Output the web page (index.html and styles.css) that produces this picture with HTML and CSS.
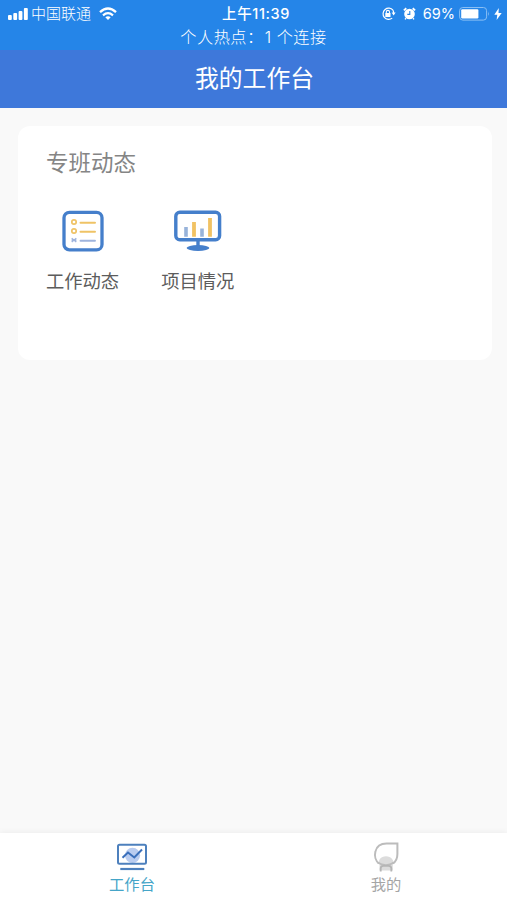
FILE: index.html
```html
<!DOCTYPE html>
<html lang="zh-CN">
<head>
    <meta charset="UTF-8">
    <meta name="viewport" content="width=device-width, initial-scale=1.0">
    <title>我的工作台</title>
    <link rel="stylesheet" href="styles.css">
</head>
<body>
    <div class="status-bar">
        <div class="status-row">
            <div class="status-left">
                <svg width="20" height="14" viewBox="0 0 20 14" fill="#fff">
                    <rect x="0" y="8" width="3.8" height="5" rx="1"/>
                    <rect x="5.3" y="6" width="3.8" height="7" rx="1"/>
                    <rect x="10.6" y="4" width="3.8" height="9" rx="1"/>
                    <rect x="15.9" y="1" width="3.9" height="12" rx="1"/>
                </svg>
                <span class="carrier">中国联通</span>
                <svg class="wifi" width="18" height="14" viewBox="0 0 18 14" fill="none" stroke="#fff">
                    <path d="M1 5.2Q9 -2 17 5.2" stroke-width="2.4"/>
                    <path d="M4 8.3Q9 4 14 8.3" stroke-width="2.2"/>
                    <path d="M6.3 10.3Q9 8.2 11.7 10.3L9 13Z" fill="#fff" stroke="none"/>
                </svg>
            </div>
            <div class="clock">上午11:39</div>
            <div class="status-right">
                <svg width="15" height="14" viewBox="0 0 15 14" fill="none" stroke="#fff">
                    <path d="M12 3.2A5.6 5.6 0 1 0 11.2 11.1M12 3.2A5.6 5.6 0 0 1 12.6 6" stroke-width="1.2"/>
                    <path d="M10.6 5.6h4l-2 3z" fill="#fff" stroke="none"/>
                    <rect x="4.3" y="6" width="5.2" height="4" fill="#fff" stroke="none"/>
                    <path d="M5.3 6.3V5a1.6 1.6 0 0 1 3.2 0v1.3" stroke-width="1.1"/>
                </svg>
                <svg class="alarm" width="13" height="14" viewBox="0 0 13 14" fill="none" stroke="#fff">
                    <circle cx="6.5" cy="7" r="5.3" fill="#fff" stroke="none"/>
                    <path d="M.9 3.4L3.3 1.3M12.1 3.4L9.7 1.3" stroke-width="1.9"/>
                    <path d="M3 11.2L2 12.4M10 11.2L11 12.4" stroke-width="1.4"/>
                    <path d="M6.8 4.1v3.3H4.3" stroke="#2585e8" stroke-width="1.1"/>
                </svg>
                <span class="percent">69%</span>
                <svg class="battery" width="31" height="14" viewBox="0 0 31 14">
                    <rect x=".6" y=".5" width="27" height="12.6" rx="3.2" fill="none" stroke="#8abff4" stroke-width="1"/>
                    <rect x="2.2" y="2.2" width="17.2" height="9.2" rx="1.2" fill="#fff"/>
                    <path d="M29 4.5q1.6 2.3 0 4.6z" fill="#8abff4"/>
                </svg>
                <svg width="8" height="12" viewBox="0 0 8 12" fill="#fff">
                    <path d="M4.8 0L.3 6.8h3L2.6 12 7.7 4.9H4.5z"/>
                </svg>
            </div>
        </div>
        <div class="hotspot">个人热点：<span class="count">1</span>个连接</div>
    </div>

    <div class="header">我的工作台</div>

    <div class="content">
        <div class="card">
            <div class="card-title">专班动态</div>
            <div class="menu">
                <div class="menu-item">
                    <svg width="42" height="42" viewBox="0 0 42 42" fill="none">
                        <rect x="2" y="2.3" width="38" height="37.6" rx="5.5" stroke="#457fcb" stroke-width="3.3"/>
                        <g stroke="#efc366" stroke-width="1.7">
                            <circle cx="12" cy="12" r="2.2"/>
                            <circle cx="12" cy="21" r="2.2"/>
                            <path d="M18.5 12.7H33M18.5 21.8H33" stroke-width="2" stroke-linecap="round"/>
                        </g>
                        <g stroke="#9fb4dd" stroke-width="1.4">
                            <path d="M9.7 28.2l4.6 3.8M9.7 32l4.6-3.8M9.5 30.1h5"/>
                            <path d="M18.5 30.8H33" stroke-width="1.9" stroke-linecap="round"/>
                        </g>
                    </svg>
                    <span>工作动态</span>
                </div>
                <div class="menu-item">
                    <svg width="48" height="42" viewBox="0 0 48 42" fill="none">
                        <rect x="1.8" y="2.2" width="43.8" height="27.6" rx="4" stroke="#457fcb" stroke-width="3.4"/>
                        <path d="M12 17v9.8M28 18.5v8.3" stroke="#98b3da" stroke-width="3.6"/>
                        <path d="M20 12v14.8M36 8v18.8" stroke="#f1c263" stroke-width="3.8"/>
                        <path d="M24 30v6" stroke="#457fcb" stroke-width="3.4"/>
                        <ellipse cx="24" cy="38" rx="11.4" ry="2.9" fill="#457fcb"/>
                    </svg>
                    <span>项目情况</span>
                </div>
            </div>
        </div>
    </div>

    <div class="tab-bar">
        <div class="tab active">
            <svg width="32" height="30" viewBox="0 0 32 30" fill="none">
                <circle cx="16.5" cy="13.3" r="7.6" fill="#b9ccf0"/>
                <rect x="2" y="2.8" width="28" height="19" rx="1.5" stroke="#4d80bd" stroke-width="2"/>
                <path d="M6.5 15.8L12 10.5l6.3 5L26 7.5" stroke="#3b70bb" stroke-width="2"/>
                <path d="M4.3 27h24" stroke="#4d80bd" stroke-width="2.2"/>
            </svg>
            <span>工作台</span>
        </div>
        <div class="tab">
            <svg width="28" height="30" viewBox="0 0 28 30" fill="none">
                <path d="M7.5 28.5v-6C5.6 18.5 8.8 14.3 14 14.3s8.8 4.2 6.8 8.4v5.8z" fill="#dcdcdc"/>
                <path d="M7 21.5C.3 16.5 1.5 1.6 14.5 1.6H25.4V12c0 4.8-1.7 7.7-4.6 9.5" stroke="#bcbcbc" stroke-width="2"/>
                <path d="M5.5 20.5Q14 25.5 22 20.5" stroke="#bcbcbc" stroke-width="1.7"/>
                <path d="M8.7 29.5v-3.2q0-2.5 2.6-2.5h5.2q2.8 0 2.8 2.5v3.2" stroke="#b5b5b5" stroke-width="1.8"/>
            </svg>
            <span>我的</span>
        </div>
    </div>
</body>
</html>
```

FILE: styles.css
```css
* {
    box-sizing: border-box;
}
body {
    display: flex;
    flex-direction: column;
    height: 100vh;
    margin: 0;
    background-color: #f9f9f9;
    font-family: Inter, "Noto Sans CJK SC", sans-serif;
    overflow: hidden;
}
svg {
    display: block;
    flex: none;
}
.status-bar {
    height: 50px;
    padding-top: 3px;
    background-color: #2585e8;
    color: #fff;
}
.status-row {
    display: grid;
    grid-template-columns: 1fr auto 1fr;
    align-items: center;
    height: 22px;
    padding: 0 5px 0 8px;
}
.status-left,
.status-right {
    display: flex;
    align-items: center;
}
.status-right {
    justify-content: flex-end;
}
.carrier {
    margin-left: 3px;
    font-size: 15px;
    line-height: 22px;
    font-weight: 300;
}
.wifi {
    margin-left: 8px;
}
.clock {
    padding-left: 2px;
    font-size: 14.5px;
    line-height: 22px;
    font-weight: 500;
    letter-spacing: 0.6px;
}
.alarm {
    margin-left: 7px;
}
.percent {
    margin-left: 7px;
    font-size: 14.5px;
    line-height: 22px;
}
.battery {
    margin: 0 4px;
}
.hotspot {
    font-size: 16.2px;
    line-height: 24px;
    text-align: center;
    font-weight: 300;
    letter-spacing: 0.5px;
}
.count {
    margin: 0 5px 0 1px;
}
.header {
    height: 58px;
    padding-left: 2px;
    background-color: #3e78da;
    color: #fff;
    font-size: 23.8px;
    line-height: 57px;
    text-align: center;
}
.content {
    flex: 1;
    padding: 18px 15px 0 18px;
}
.card {
    height: 234px;
    padding: 19px 28px;
    background-color: #fff;
    border-radius: 12px;
}
.card-title {
    color: #858585;
    font-size: 22.5px;
    line-height: 36px;
}
.menu {
    display: flex;
    gap: 42px;
    margin-top: 29px;
}
.menu-item {
    display: flex;
    flex-direction: column;
    align-items: center;
    color: #5c5c5c;
    font-size: 18.3px;
    line-height: 28px;
}
.menu-item span {
    margin-top: 15px;
}
.tab-bar {
    display: flex;
    height: 67px;
    background-color: #fff;
    box-shadow: 0 -1px 6px rgba(0, 0, 0, 0.05);
}
.tab {
    display: flex;
    flex: 1;
    flex-direction: column;
    align-items: center;
    padding: 9px 0 0 12px;
    color: #a5a5a5;
    font-size: 15.3px;
    line-height: 25px;
}
.tab.active {
    padding-left: 11px;
    color: #45a5c8;
}
```
